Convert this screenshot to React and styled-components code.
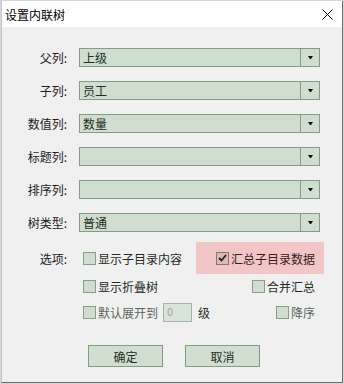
import React from 'react';
import styled, { createGlobalStyle } from 'styled-components';

const GlobalStyle = createGlobalStyle`
  body {
    margin: 0;
    background: #ffffff;
    font-family: "Noto Sans CJK SC", "Liberation Sans", sans-serif;
  }
`;

const Window = styled.div`
  box-sizing: border-box;
  width: 344px;
  height: 384px;
  border: 1px solid #d6d6d6;
  display: flex;
`;

const Frame = styled.div`
  flex: 1;
  display: flex;
  flex-direction: column;
  background: #f0f0f0;
  border-left: 1px solid #c6c6c6;
  border-right: 1px solid #6c6c6c;
  border-bottom: 1px solid #6c6c6c;
`;

const TitleBar = styled.div`
  height: 26px;
  background: #ffffff;
  display: flex;
  align-items: center;
  justify-content: space-between;
  padding: 0 9px 0 3px;
  font-size: 12px;
  color: #000;
`;

const Body = styled.div`
  padding-top: 21px;
  display: flex;
  flex-direction: column;
`;

const FieldGrid = styled.div`
  display: grid;
  grid-template-columns: 65px 241px;
  column-gap: 12px;
  row-gap: 14px;
`;

const Label = styled.div`
  height: ${({ tall }) => (tall ? '32px' : '19px')};
  display: flex;
  align-items: center;
  justify-content: flex-end;
  font-size: 12px;
  color: #1c1c1c;
`;

const Combo = styled.div`
  box-sizing: border-box;
  height: 19px;
  display: flex;
  background: #cfdecf;
  border: 1px solid #879a87;
`;

const ComboValue = styled.div`
  flex: 1;
  display: flex;
  align-items: center;
  padding-left: 3px;
  font-size: 12px;
  color: #1d2e1d;
`;

const ComboButton = styled.div`
  width: 18px;
  border-left: 1px solid #879a87;
  display: flex;
  align-items: center;
  justify-content: center;
`;

const OptionsGrid = styled.div`
  margin-top: 10px;
  display: grid;
  grid-template-columns: 65px 241px;
  column-gap: 16px;
`;

const Options = styled.div`
  display: flex;
  flex-direction: column;
`;

const OptionRow = styled.div`
  height: ${({ h }) => h}px;
  margin-top: ${({ mt }) => mt || 0}px;
  display: flex;
  align-items: center;
  justify-content: space-between;
`;

const Highlight = styled.div`
  width: 128px;
  height: 32px;
  box-sizing: border-box;
  background: #f2c6c6;
  display: flex;
  align-items: center;
  justify-content: flex-end;
  padding-right: 9px;
`;

const Check = styled.label`
  display: flex;
  align-items: center;
  gap: 2px;
  font-size: 12px;
  color: ${({ disabled, warm }) => (disabled ? '#5c665c' : warm ? '#3a1c1c' : '#1d2e1d')};
  margin-right: ${({ right }) => (right ? '9px' : '0')};
`;

const Box = styled.span`
  box-sizing: border-box;
  width: 13px;
  height: 13px;
  border: 1px solid ${({ warm }) => (warm ? '#8c7468' : '#8a9c8a')};
  background: ${({ warm }) => (warm ? '#d8bcb4' : '#cfdecf')};
  display: flex;
  align-items: center;
  justify-content: center;
`;

const LevelGroup = styled.div`
  display: flex;
  align-items: center;
`;

const LevelInput = styled.div`
  box-sizing: border-box;
  width: 29px;
  height: 19px;
  margin-left: 5px;
  border: 1px solid #a4b4a4;
  background: #d8e4d8;
  font-size: 11px;
  color: #b49c9c;
  padding-left: 3px;
  line-height: 14px;
`;

const LevelUnit = styled.span`
  margin-left: 6px;
  font-size: 12px;
  color: #1d2e1d;
`;

const ButtonRow = styled.div`
  margin-top: 23px;
  padding-left: 86px;
  display: flex;
  gap: 22px;
`;

const Button = styled.div`
  box-sizing: border-box;
  width: 75px;
  height: 22px;
  background: #cfdecf;
  border: 1px solid #879a87;
  display: flex;
  align-items: center;
  justify-content: center;
  font-size: 12px;
  color: #1d2e1d;
`;

const fields = [
  ['父列:', '上级'],
  ['子列:', '员工'],
  ['数值列:', '数量'],
  ['标题列:', ''],
  ['排序列:', ''],
  ['树类型:', '普通'],
];

const Arrow = () => (
  <svg width="5" height="3" viewBox="0 0 5 3">
    <polygon points="0,0 5,0 3,3 2,3" fill="#000" />
  </svg>
);

const CheckBox = ({ checked, warm }) => (
  <Box warm={warm}>
    {checked && (
      <svg width="9" height="8" viewBox="0 0 9 8">
        <polyline points="1,4 3.5,6.5 8,1" fill="none" stroke="#2a1a1a" strokeWidth="1.8" />
      </svg>
    )}
  </Box>
);

export default function App() {
  return (
    <>
      <GlobalStyle />
      <Window>
        <Frame>
          <TitleBar>
            <span>设置内联树</span>
            <svg width="11" height="11" viewBox="0 0 11 11">
              <path d="M0.5 0.5 L10.5 10.5 M10.5 0.5 L0.5 10.5" stroke="#000" strokeWidth="1" />
            </svg>
          </TitleBar>
          <Body>
            <FieldGrid>
              {fields.map(([label, value]) => (
                <React.Fragment key={label}>
                  <Label>{label}</Label>
                  <Combo>
                    <ComboValue>{value}</ComboValue>
                    <ComboButton>
                      <Arrow />
                    </ComboButton>
                  </Combo>
                </React.Fragment>
              ))}
            </FieldGrid>
            <OptionsGrid>
              <Label tall>选项:</Label>
              <Options>
                <OptionRow h={32}>
                  <Check>
                    <CheckBox />
                    显示子目录内容
                  </Check>
                  <Highlight>
                    <Check warm>
                      <CheckBox checked warm />
                      汇总子目录数据
                    </Check>
                  </Highlight>
                </OptionRow>
                <OptionRow h={24}>
                  <Check>
                    <CheckBox />
                    显示折叠树
                  </Check>
                  <Check right>
                    <CheckBox />
                    合并汇总
                  </Check>
                </OptionRow>
                <OptionRow h={20} mt={4}>
                  <LevelGroup>
                    <Check disabled>
                      <CheckBox />
                      默认展开到
                    </Check>
                    <LevelInput>0</LevelInput>
                    <LevelUnit>级</LevelUnit>
                  </LevelGroup>
                  <Check disabled right>
                    <CheckBox />
                    降序
                  </Check>
                </OptionRow>
              </Options>
            </OptionsGrid>
            <ButtonRow>
              <Button>确定</Button>
              <Button>取消</Button>
            </ButtonRow>
          </Body>
        </Frame>
      </Window>
    </>
  );
}
